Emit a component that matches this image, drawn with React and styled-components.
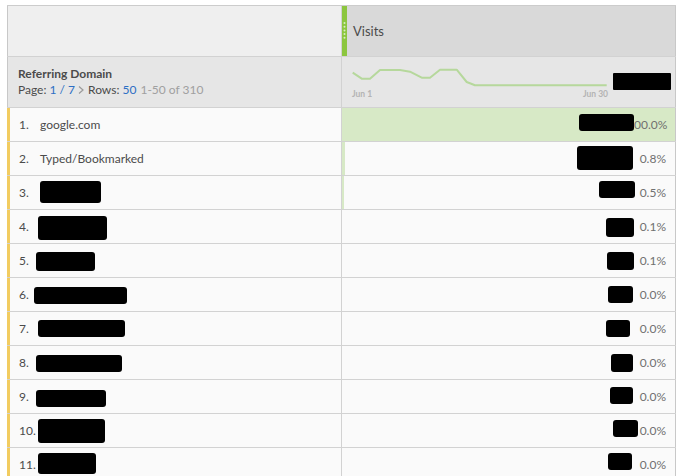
import React from "react";
import styled, { createGlobalStyle } from "styled-components";

const Global = createGlobalStyle`
  html, body { margin: 0; padding: 0; background: #ffffff; }
  body { font-family: Lato, "Noto Sans", "Liberation Sans", sans-serif; color: #4b4b4b; }
`;

const Page = styled.div`
  padding: 5px 0 0 7px;
`;

const Table = styled.div`
  width: 669px;
  border-top: 1px solid #cccccc;
`;

const Row = styled.div`
  display: grid;
  grid-template-columns: 335px 334px;
  height: ${(p) => p.$h}px;
  box-sizing: border-box;
  border-bottom: 1px solid #d2d2d2;
`;

const LeftCell = styled.div`
  box-sizing: border-box;
  display: flex;
  align-items: ${(p) => (p.$stack ? "flex-start" : "center")};
  flex-direction: ${(p) => (p.$stack ? "column" : "row")};
  justify-content: ${(p) => (p.$stack ? "center" : "flex-start")};
  border-left: ${(p) => (p.$accent ? "3px solid #f2cc60" : "1px solid #c8c8c8")};
  border-right: 1px solid #d2d2d2;
  background: ${(p) => p.$bg};
  padding-left: ${(p) => p.$pl}px;
  font-size: 12px;
`;

const RightCell = styled.div`
  box-sizing: border-box;
  display: flex;
  align-items: center;
  justify-content: flex-end;
  border-right: 1px solid #c8c8c8;
  background: ${(p) => p.$bg};
  padding-right: 9px;
  font-size: 12px;
`;

const HeadRight = styled(RightCell)`
  justify-content: flex-start;
  padding-right: 0;
`;

const Grip = styled.div`
  width: 5px;
  align-self: stretch;
  background: #8cc63f;
  display: flex;
  align-items: center;
  justify-content: center;
  margin-right: 6px;
`;

const ColTitle = styled.span`
  font-size: 13px;
  color: #4b4b4b;
`;

const DimTitle = styled.div`
  font-weight: 700;
  font-size: 12px;
  line-height: 16px;
  color: #4b4b4b;
`;

const Pager = styled.div`
  display: flex;
  align-items: center;
  font-size: 12px;
  line-height: 16px;
  color: #4b4b4b;
  white-space: pre;
`;

const Link = styled.span`
  color: #2d6fc4;
`;

const Muted = styled.span`
  color: #a0a0a0;
  margin-left: 4px;
`;

const ChartCell = styled(RightCell)`
  justify-content: flex-start;
  padding-left: 10px;
  padding-right: 0;
`;

const Chart = styled.div`
  width: 256px;
  display: flex;
  flex-direction: column;
`;

const Axis = styled.div`
  display: flex;
  justify-content: space-between;
  font-size: 8.5px;
  font-weight: 700;
  color: #b4b4b4;
  line-height: 11px;
`;

const Num = styled.span`
  width: 21px;
  flex: none;
  color: #4b4b4b;
`;

const Label = styled.span`
  color: #4b4b4b;
`;

const Pct = styled.span`
  width: 32px;
  text-align: right;
  color: #707070;
  flex: none;
`;

const Redact = styled.span`
  display: block;
  flex: none;
  align-self: flex-start;
  background: #000;
  border-radius: 3px;
  width: ${(p) => p.$w}px;
  height: ${(p) => p.$h}px;
`;

const HeadRedact = styled(Redact)`
  align-self: center;
  margin: -2px 0 0 5px;
  border-radius: 1px;
`;

const BodyRight = styled(RightCell)`
  background: linear-gradient(90deg, #d7e9c6 ${(p) => p.$bar}px, #fafafa ${(p) => p.$bar}px);
`;

const rows = [
  { label: "google.com", pct: "00.0%", bar: 333, rb: { x: 578, y: 114, w: 55, h: 17 } },
  { label: "Typed/Bookmarked", pct: "0.8%", bar: 3, rb: { x: 576, y: 146, w: 56, h: 24 } },
  { lb: { x: 40, y: 181, w: 61, h: 22 }, pct: "0.5%", bar: 2, rb: { x: 598, y: 181, w: 36, h: 17 } },
  { lb: { x: 38, y: 216, w: 69, h: 24 }, pct: "0.1%", bar: 0, rb: { x: 605, y: 218, w: 28, h: 19 } },
  { lb: { x: 36, y: 252, w: 59, h: 19 }, pct: "0.1%", bar: 0, rb: { x: 606, y: 252, w: 27, h: 18 } },
  { lb: { x: 34, y: 287, w: 93, h: 17 }, pct: "0.0%", bar: 0, rb: { x: 607, y: 286, w: 25, h: 17 } },
  { lb: { x: 38, y: 320, w: 87, h: 17 }, pct: "0.0%", bar: 0, rb: { x: 605, y: 320, w: 24, h: 17 } },
  { lb: { x: 36, y: 355, w: 86, h: 17 }, pct: "0.0%", bar: 0, rb: { x: 610, y: 354, w: 22, h: 18 } },
  { lb: { x: 36, y: 390, w: 70, h: 17 }, pct: "0.0%", bar: 0, rb: { x: 609, y: 387, w: 23, h: 17 } },
  { lb: { x: 38, y: 419, w: 67, h: 24 }, pct: "0.0%", bar: 0, rb: { x: 612, y: 420, w: 25, h: 17 } },
  { lb: { x: 38, y: 453, w: 58, h: 21 }, pct: "0.0%", bar: 0, rb: { x: 607, y: 453, w: 24, h: 17 } },
];

const sparkPoints =
  "0.7,8.7 9.7,14.7 18,14.7 28,6 48,6 58,7.7 69.7,13.7 78,13.7 88,5.7 104.7,5.7 114.7,18 123,21.3 254.7,21.3";

export default function App() {
  return (
    <>
      <Global />
      <Page>
        <Table>
          <Row $h={51}>
            <LeftCell $bg="#efefef" $pl={0} />
            <HeadRight $bg="#d9d9d9">
              <Grip>
                <svg width="3" height="18" viewBox="0 0 3 18">
                  {[1, 4.7, 8.4, 12.1, 15.8].map((y) => (
                    <circle key={y} cx="1.5" cy={y} r="1" fill="#d8efbf" />
                  ))}
                </svg>
              </Grip>
              <ColTitle>Visits</ColTitle>
            </HeadRight>
          </Row>
          <Row $h={51}>
            <LeftCell $bg="#e6e6e6" $pl={10} $stack>
              <DimTitle>Referring Domain</DimTitle>
              <Pager>
                Page: <Link>1 / 7</Link>
                <svg width="8" height="10" viewBox="0 0 8 10" style={{ margin: "0 3px 0 2px" }}>
                  <polyline points="2,1.5 6,5 2,8.5" fill="none" stroke="#9a9a9a" strokeWidth="1.2" />
                </svg>
                Rows: <Link>50</Link>
                <Muted>1-50 of 310</Muted>
              </Pager>
            </LeftCell>
            <ChartCell $bg="#e6e6e6">
              <Chart>
                <svg width="256" height="25" viewBox="0 0 256 25">
                  <polyline points={sparkPoints} fill="none" stroke="#b6d89c" strokeWidth="2" strokeLinejoin="round" />
                </svg>
                <Axis>
                  <span>Jun 1</span>
                  <span>Jun 30</span>
                </Axis>
              </Chart>
              <HeadRedact $w={58} $h={17} />
            </ChartCell>
          </Row>
          {rows.map((r, i) => {
            const top = 108 + i * 34;
            return (
              <Row $h={34} key={i}>
                <LeftCell $accent $bg="#fafafa" $pl={9}>
                  <Num>{i + 1}.</Num>
                  {r.label ? (
                    <Label>{r.label}</Label>
                  ) : (
                    <Redact
                      $w={r.lb.w}
                      $h={r.lb.h}
                      style={{ marginLeft: r.lb.x - 40, marginTop: r.lb.y - top }}
                    />
                  )}
                </LeftCell>
                <BodyRight $bar={r.bar}>
                  <Redact
                    $w={r.rb.w}
                    $h={r.rb.h}
                    style={{ marginRight: 633 - (r.rb.x + r.rb.w), marginTop: r.rb.y - top }}
                  />
                  <Pct>{r.pct}</Pct>
                </BodyRight>
              </Row>
            );
          })}
        </Table>
      </Page>
    </>
  );
}
